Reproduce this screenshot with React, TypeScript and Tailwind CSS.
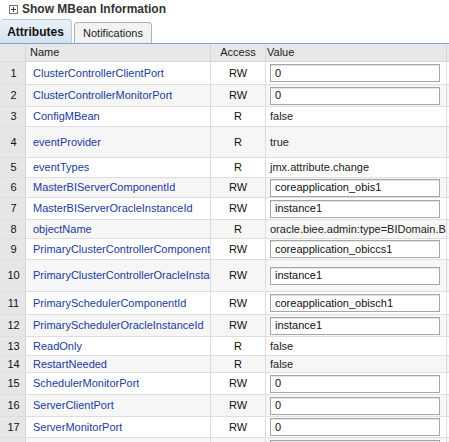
import React from "react"

type Row = {
  name: string
  access: "R" | "RW"
  value: string
  h: number
}

const rows: Row[] = [
  { name: "ClusterControllerClientPort", access: "RW", value: "0", h: 23 },
  { name: "ClusterControllerMonitorPort", access: "RW", value: "0", h: 22 },
  { name: "ConfigMBean", access: "R", value: "false", h: 20 },
  { name: "eventProvider", access: "R", value: "true", h: 31 },
  { name: "eventTypes", access: "R", value: "jmx.attribute.change", h: 20 },
  { name: "MasterBIServerComponentId", access: "RW", value: "coreapplication_obis1", h: 20 },
  { name: "MasterBIServerOracleInstanceId", access: "RW", value: "instance1", h: 22 },
  { name: "objectName", access: "R", value: "oracle.biee.admin:type=BIDomain.BIInstance.ServerConfiguration", h: 19 },
  { name: "PrimaryClusterControllerComponentId", access: "RW", value: "coreapplication_obiccs1", h: 21 },
  { name: "PrimaryClusterControllerOracleInstanceId", access: "RW", value: "instance1", h: 32 },
  { name: "PrimarySchedulerComponentId", access: "RW", value: "coreapplication_obisch1", h: 23 },
  { name: "PrimarySchedulerOracleInstanceId", access: "RW", value: "instance1", h: 22 },
  { name: "ReadOnly", access: "R", value: "false", h: 19 },
  { name: "RestartNeeded", access: "R", value: "false", h: 17 },
  { name: "SchedulerMonitorPort", access: "RW", value: "0", h: 22 },
  { name: "ServerClientPort", access: "RW", value: "0", h: 22 },
  { name: "ServerMonitorPort", access: "RW", value: "0", h: 21 },
  { name: "ServerPort", access: "RW", value: "0", h: 22 },
]

function PlusBox() {
  return (
    <svg width="9" height="9" viewBox="0 0 9 9" className="shrink-0">
      <rect x="0.5" y="0.5" width="8" height="8" fill="#fff" stroke="#777" />
      <path d="M2 4.5h5M4.5 2v5" stroke="#444" strokeWidth="1" />
    </svg>
  )
}

export default function App() {
  return (
    <div className="w-[449px] h-[442px] overflow-hidden bg-white font-['Liberation_Sans',Arial,sans-serif] text-[11px] text-[#222]">
      {/* section title */}
      <div className="flex items-center gap-[4px] pl-[9px] h-[17px] pt-[1px]">
        <PlusBox />
        <span className="text-[12px] font-bold text-[#333]">Show MBean Information</span>
      </div>

      {/* tabs */}
      <div className="flex items-end h-[27px] border-b border-[#7ea3cc]">
        <div className="h-[24px] w-[72px] rounded-t-[4px] border border-b-0 border-l-0 border-[#b4c8df] bg-gradient-to-b from-[#e9f1f8] to-[#d3e3f1] flex items-center justify-center font-bold text-[12px] text-[#111]">
          Attributes
        </div>
        <div className="ml-[2px] h-[21px] w-[78px] rounded-t-[4px] border border-b-0 border-[#b0b0b0] bg-[#f3f3f3] flex items-center justify-center text-[11px] text-[#222]">
          Notifications
        </div>
      </div>

      {/* header row */}
      <div className="flex h-[18px] bg-[#e8e8e8] border-b border-[#d8d8d8] text-[11px] text-[#222]">
        <div className="w-[26px] border-r border-[#d6d6d6]" />
        <div className="w-[185px] border-r border-[#d6d6d6] pl-[4px] flex items-center">Name</div>
        <div className="w-[55px] border-r border-[#d6d6d6] flex items-center justify-center">Access</div>
        <div className="w-[181px] border-r border-[#d6d6d6] pl-[1px] flex items-center">Value</div>
      </div>

      {/* attribute rows */}
      {rows.map((row, i) => {
        const even = i % 2 === 1
        return (
          <div
            key={row.name}
            className={`flex border-b border-[#dedede] ${even ? "bg-[#f6f6f6]" : "bg-white"}`}
            style={{ height: row.h }}
          >
            <div className="w-[26px] shrink-0 border-r border-[#d6d6d6] bg-[#e6e6e6] flex items-center justify-center pl-[2px] text-[#111]">
              {i + 1}
            </div>
            <div className="w-[185px] shrink-0 border-r border-[#dcdcdc] pl-[7px] flex items-center overflow-hidden whitespace-nowrap text-[#1c3a9c]">
              <span className="block overflow-hidden">{row.name}</span>
            </div>
            <div className="w-[55px] shrink-0 border-r border-[#dcdcdc] flex items-center justify-center text-[#111]">
              {row.access}
            </div>
            <div className="w-[181px] shrink-0 border-r border-[#dcdcdc] flex items-center overflow-hidden whitespace-nowrap">
              {row.access === "RW" ? (
                <div className="ml-[4px] h-[18px] w-[170px] border border-[#a6a6a6] bg-white shadow-[inset_0_1px_0_#e4e4e4] flex items-center pl-[4px] text-[#111]">
                  {row.value}
                </div>
              ) : (
                <span className="block overflow-hidden pl-[4px] text-[#222]">{row.value}</span>
              )}
            </div>
          </div>
        )
      })}
    </div>
  )
}
